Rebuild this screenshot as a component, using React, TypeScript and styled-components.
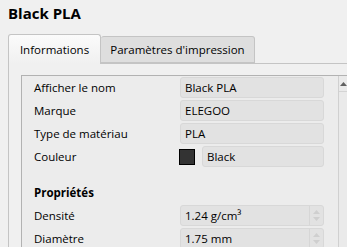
import styled, { createGlobalStyle } from 'styled-components';

const GlobalStyle = createGlobalStyle`
  html, body {
    margin: 0;
    padding: 0;
    background: #f0f0f0;
    overflow: hidden;
  }
  body {
    font-family: "Open Sans", "Noto Sans", sans-serif;
    font-size: 11.5px;
    color: #000;
  }
`;

const Page = styled.div`
  width: 347px;
  height: 247px;
  padding: 3px 0 0 8px;
  box-sizing: border-box;
  overflow: hidden;
`;

const Title = styled.h1`
  margin: 0;
  height: 31px;
  font-size: 15px;
  font-weight: 700;
  line-height: 20px;
`;

const TabBar = styled.div`
  display: flex;
  align-items: flex-end;
  height: 29px;
  position: relative;
  z-index: 1;
`;

const Tab = styled.div<{ $active?: boolean }>`
  box-sizing: border-box;
  height: ${(p) => (p.$active ? '30px' : '27px')};
  display: flex;
  align-items: center;
  justify-content: center;
  border: 1px solid #c4c4c4;
  border-bottom: ${(p) => (p.$active ? 'none' : '1px solid #c4c4c4')};
  border-left: ${(p) => (p.$active ? '1px solid #c4c4c4' : 'none')};
  border-radius: 3px 3px 0 0;
  background: ${(p) => (p.$active ? 'linear-gradient(#fbfbfb, #f0f0f0)' : '#dedede')};
  width: ${(p) => (p.$active ? '93px' : '154px')};
  margin-bottom: ${(p) => (p.$active ? '-1px' : '0')};
  white-space: nowrap;
`;

const Pane = styled.div`
  border-top: 1px solid #c4c4c4;
  border-left: 1px solid #c4c4c4;
  padding: 11px 0 0 12px;
  height: 200px;
  background: #f0f0f0;
`;

const ScrollArea = styled.div`
  display: flex;
  border-top: 1px solid #b2b2b2;
  border-left: 1px solid #b2b2b2;
  height: 190px;
  background: #ececec;
`;

const Content = styled.div`
  width: 290px;
  padding: 1px 14px 0 12px;
`;

const Grid = styled.div`
  display: grid;
  grid-template-columns: 146px 144px;
  grid-auto-rows: 21px;
  row-gap: 2px;
  align-items: center;
`;

const Label = styled.div`
  line-height: 21px;
  white-space: nowrap;
`;

const Field = styled.div`
  box-sizing: border-box;
  height: 21px;
  display: flex;
  align-items: center;
  padding-left: 4px;
  background: #e2e2e2;
  border: 1px solid #d8d8d8;
  border-radius: 3px;
  flex: 1;
  position: relative;
`;

const ColorCell = styled.div`
  display: flex;
  align-items: center;
  gap: 7px;
  margin-left: -1px;
`;

const Swatch = styled.div`
  width: 16px;
  height: 16px;
  box-sizing: border-box;
  background: #333333;
  border: 1px solid #000;
`;

const Section = styled.div`
  font-weight: 700;
  line-height: 21px;
  margin: 15px 0 2px;
`;

const Spin = styled.div`
  position: absolute;
  right: 0;
  top: 0;
  bottom: 0;
  width: 14px;
  border-left: 1px solid #d6d6d6;
  display: flex;
  flex-direction: column;
  align-items: center;
  justify-content: space-around;
  padding: 3px 0;
  box-sizing: border-box;
`;

const ScrollBar = styled.div`
  width: 9px;
  border-left: 1px solid #d0d0d0;
  background: #eaeaea;
`;

const ScrollButton = styled.div`
  height: 15px;
  border-bottom: 1px solid #d4d4d4;
  display: flex;
  align-items: center;
  justify-content: flex-end;
`;

function Arrow({ up, color }: { up?: boolean; color: string }) {
  return (
    <svg width="7" height="4" viewBox="0 0 7 4">
      <path d={up ? 'M0 4 L3.5 0 L7 4 Z' : 'M0 0 L3.5 4 L7 0 Z'} fill={color} />
    </svg>
  );
}

function SpinBox({ value }: { value: string }) {
  return (
    <Field>
      {value}
      <Spin>
        <Arrow up color="#cfcfcf" />
        <Arrow color="#cfcfcf" />
      </Spin>
    </Field>
  );
}

export default function App() {
  return (
    <Page>
      <GlobalStyle />
      <Title>Black PLA</Title>
      <TabBar>
        <Tab $active>Informations</Tab>
        <Tab>Paramètres d'impression</Tab>
      </TabBar>
      <Pane>
        <ScrollArea>
          <Content>
            <Grid>
              <Label>Afficher le nom</Label>
              <Field>Black PLA</Field>
              <Label>Marque</Label>
              <Field>ELEGOO</Field>
              <Label>Type de matériau</Label>
              <Field>PLA</Field>
              <Label>Couleur</Label>
              <ColorCell>
                <Swatch />
                <Field>Black</Field>
              </ColorCell>
            </Grid>
            <Section>Propriétés</Section>
            <Grid>
              <Label>Densité</Label>
              <SpinBox value="1.24 g/cm³" />
              <Label>Diamètre</Label>
              <SpinBox value="1.75 mm" />
            </Grid>
          </Content>
          <ScrollBar>
            <ScrollButton>
              <Arrow up color="#606060" />
            </ScrollButton>
          </ScrollBar>
        </ScrollArea>
      </Pane>
    </Page>
  );
}
